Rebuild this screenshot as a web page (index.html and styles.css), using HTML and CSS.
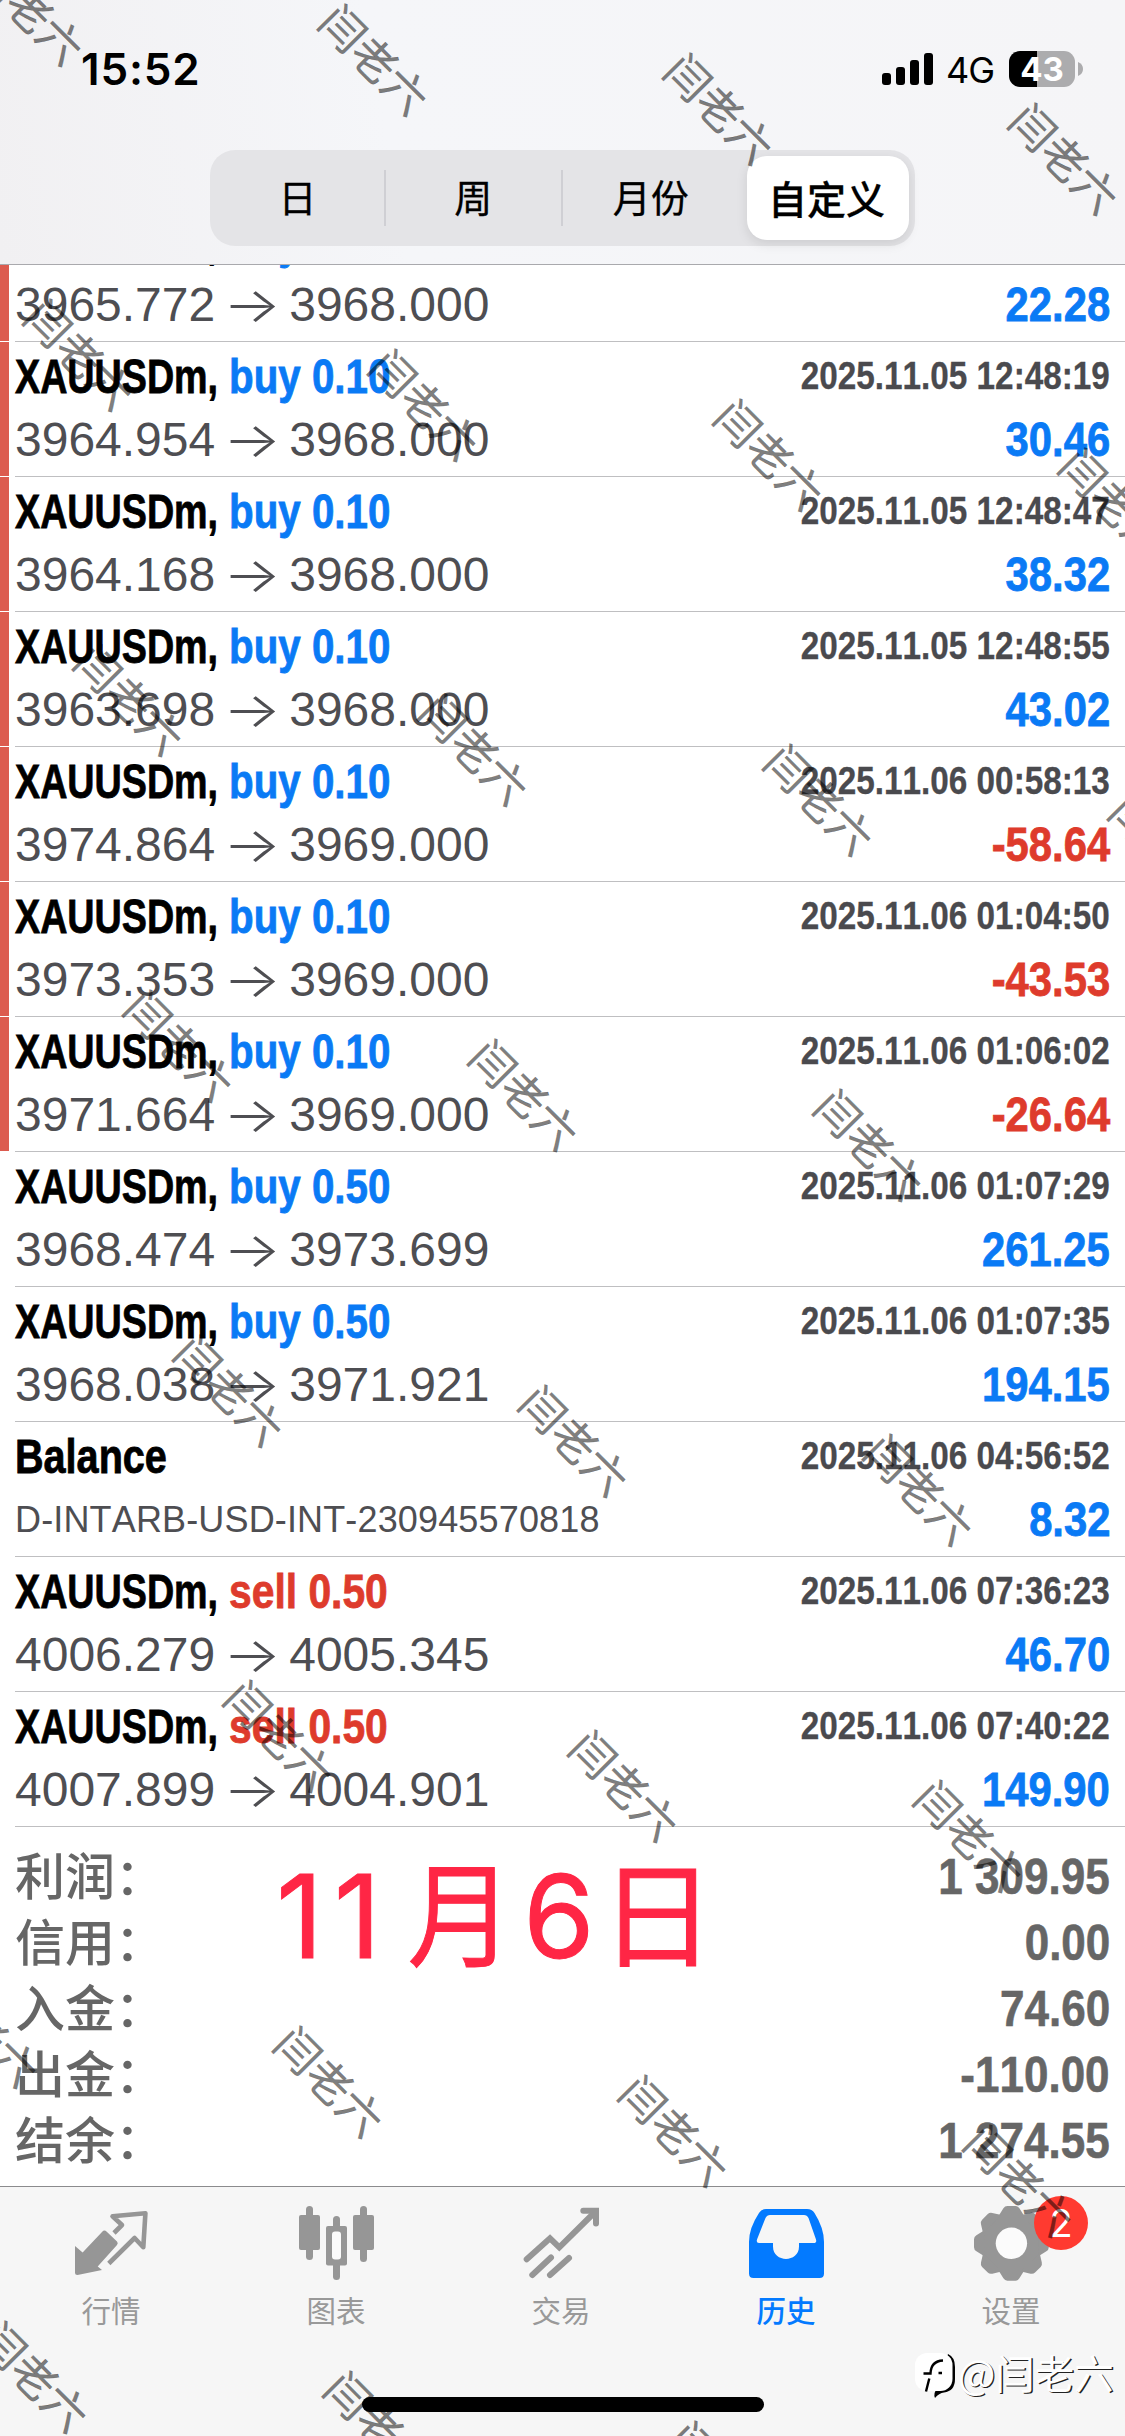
FILE: index.html
```html
<!DOCTYPE html>
<html lang="zh-CN">
<head>
<meta charset="utf-8">
<title>历史</title>
<link rel="stylesheet" href="styles.css">
</head>
<body>
<div class="screen">
  <header class="header">
    <div class="status">
      <span class="time">15:52</span>
      <div class="status-right">
        <svg class="signal" width="52" height="32" viewBox="0 0 52 32"><rect x="0" y="20" width="9" height="12" rx="3"/><rect x="14" y="14" width="9" height="18" rx="3"/><rect x="28" y="7" width="9" height="25" rx="3"/><rect x="42" y="0" width="9" height="32" rx="3"/></svg>
        <span class="network">4G</span>
        <div class="battery"><span>43</span></div>
        <svg class="nub" width="5" height="14" viewBox="0 0 5 14"><path d="M0 0q5 2 5 7t-5 7z"/></svg>
      </div>
    </div>
    <nav class="segments">
      <span class="segment">日</span>
      <span class="segment">周</span>
      <span class="segment">月份</span>
      <span class="segment selected">自定义</span>
    </nav>
  </header>

  <main class="list">
    <div class="row marked"><div class="cell">
      <div class="line"><span class="symbol">XAUUSDm,</span><span class="op buy">buy 0.10</span></div>
      <div class="line"><span class="price">3965.772</span><span class="arrow">→</span><span class="price">3968.000</span><span class="amount buy">22.28</span></div>
    </div></div>
    <div class="row marked"><div class="cell">
      <div class="line"><span class="symbol">XAUUSDm,</span><span class="op buy">buy 0.10</span><span class="date">2025.11.05 12:48:19</span></div>
      <div class="line"><span class="price">3964.954</span><span class="arrow">→</span><span class="price">3968.000</span><span class="amount buy">30.46</span></div>
    </div></div>
    <div class="row marked"><div class="cell">
      <div class="line"><span class="symbol">XAUUSDm,</span><span class="op buy">buy 0.10</span><span class="date">2025.11.05 12:48:47</span></div>
      <div class="line"><span class="price">3964.168</span><span class="arrow">→</span><span class="price">3968.000</span><span class="amount buy">38.32</span></div>
    </div></div>
    <div class="row marked"><div class="cell">
      <div class="line"><span class="symbol">XAUUSDm,</span><span class="op buy">buy 0.10</span><span class="date">2025.11.05 12:48:55</span></div>
      <div class="line"><span class="price">3963.698</span><span class="arrow">→</span><span class="price">3968.000</span><span class="amount buy">43.02</span></div>
    </div></div>
    <div class="row marked"><div class="cell">
      <div class="line"><span class="symbol">XAUUSDm,</span><span class="op buy">buy 0.10</span><span class="date">2025.11.06 00:58:13</span></div>
      <div class="line"><span class="price">3974.864</span><span class="arrow">→</span><span class="price">3969.000</span><span class="amount sell">-58.64</span></div>
    </div></div>
    <div class="row marked"><div class="cell">
      <div class="line"><span class="symbol">XAUUSDm,</span><span class="op buy">buy 0.10</span><span class="date">2025.11.06 01:04:50</span></div>
      <div class="line"><span class="price">3973.353</span><span class="arrow">→</span><span class="price">3969.000</span><span class="amount sell">-43.53</span></div>
    </div></div>
    <div class="row marked"><div class="cell">
      <div class="line"><span class="symbol">XAUUSDm,</span><span class="op buy">buy 0.10</span><span class="date">2025.11.06 01:06:02</span></div>
      <div class="line"><span class="price">3971.664</span><span class="arrow">→</span><span class="price">3969.000</span><span class="amount sell">-26.64</span></div>
    </div></div>
    <div class="row"><div class="cell">
      <div class="line"><span class="symbol">XAUUSDm,</span><span class="op buy">buy 0.50</span><span class="date">2025.11.06 01:07:29</span></div>
      <div class="line"><span class="price">3968.474</span><span class="arrow">→</span><span class="price">3973.699</span><span class="amount buy">261.25</span></div>
    </div></div>
    <div class="row"><div class="cell">
      <div class="line"><span class="symbol">XAUUSDm,</span><span class="op buy">buy 0.50</span><span class="date">2025.11.06 01:07:35</span></div>
      <div class="line"><span class="price">3968.038</span><span class="arrow">→</span><span class="price">3971.921</span><span class="amount buy">194.15</span></div>
    </div></div>
    <div class="row"><div class="cell">
      <div class="line"><span class="symbol balance">Balance</span><span class="date">2025.11.06 04:56:52</span></div>
      <div class="line"><span class="comment">D-INTARB-USD-INT-230945570818</span><span class="amount buy">8.32</span></div>
    </div></div>
    <div class="row"><div class="cell">
      <div class="line"><span class="symbol">XAUUSDm,</span><span class="op sell">sell 0.50</span><span class="date">2025.11.06 07:36:23</span></div>
      <div class="line"><span class="price">4006.279</span><span class="arrow">→</span><span class="price">4005.345</span><span class="amount buy">46.70</span></div>
    </div></div>
    <div class="row"><div class="cell">
      <div class="line"><span class="symbol">XAUUSDm,</span><span class="op sell">sell 0.50</span><span class="date">2025.11.06 07:40:22</span></div>
      <div class="line"><span class="price">4007.899</span><span class="arrow">→</span><span class="price">4004.901</span><span class="amount buy">149.90</span></div>
    </div></div>
  </main>

  <section class="summary">
    <div class="total"><span class="label">利润：</span><span class="sum">1 309.95</span></div>
    <div class="total"><span class="label">信用：</span><span class="sum">0.00</span></div>
    <div class="total"><span class="label">入金：</span><span class="sum">74.60</span></div>
    <div class="total"><span class="label">出金：</span><span class="sum">-110.00</span></div>
    <div class="total"><span class="label">结余：</span><span class="sum">1 274.55</span></div>
    <div class="note"><span class="digits month">11</span><span class="yue">月</span><span class="digits day">6</span><span>日</span></div>
  </section>

  <footer class="tabs">
    <div class="tab">
      <svg width="225" height="105" viewBox="0 0 225 105"><path fill="none" stroke="#969696" stroke-width="4.6" stroke-linejoin="round" d="M114 46L122 38L112.500 29.300L145.400 26.300L143.300 60.300L134.600 51L108.800 76.500"/><path fill="#969696" d="M75 59L82.600 65.500L102 45Q104.300 42.500 106.500 44.500L117 54.500Q118.500 56 117 58L97.700 79.500L102 83L77.500 88Q75 88 75 85.500Z"/></svg>
      <span class="name">行情</span>
    </div>
    <div class="tab">
      <svg width="225" height="105" viewBox="0 0 225 105" fill="#969696"><rect x="81" y="19" width="7" height="54" rx="3.500"/><rect x="74" y="28" width="21" height="35" rx="2"/><rect x="108" y="29" width="7" height="64" rx="3.500"/><rect x="101" y="39" width="21" height="39.500" rx="2"/><rect x="107" y="44.500" width="9" height="28" rx="3" fill="#fbfbfb"/><rect x="135" y="19" width="7" height="56" rx="3.500"/><rect x="128" y="28" width="21" height="35" rx="2"/></svg>
      <span class="name">图表</span>
    </div>
    <div class="tab">
      <svg width="225" height="105" viewBox="0 0 225 105" fill="none" stroke="#969696" stroke-width="6" stroke-linecap="round"><path d="M76.700 72.300L100 51.300L109.300 60.300L145 25"/><path d="M133.300 23.700H146V36.500"/><path d="M82.300 88L101 70.500M100 88L119 71"/></svg>
      <span class="name">交易</span>
    </div>
    <div class="tab active">
      <svg width="225" height="105" viewBox="0 0 225 105"><path fill="#037aff" fill-rule="evenodd" d="M91 22H132Q137 22 139.500 26Q149 41 149 55V86.500Q149 91 144.500 91H78.500Q74 91 74 86.500V55Q74 41 84 26Q86.500 22 91 22ZM95 28Q92 28 90.500 31L82 52.500Q81 56 84 56H98V59.500C98 76 124 76 124 59.500V56H138.500Q142 56 141 52.500L133.500 31Q132 28 129 28Z"/></svg>
      <span class="name">历史</span>
    </div>
    <div class="tab">
      <svg width="225" height="105" viewBox="0 0 225 105"><g transform="translate(111.400 56.300)" fill="#969696"><circle r="30.500"/><path id="t" d="M-13-27L-8-35Q-6.500-37.400-4-37.400H4Q6.500-37.400 8-35L13-27Z"/><use href="#t" transform="rotate(45)"/><use href="#t" transform="rotate(90)"/><use href="#t" transform="rotate(135)"/><use href="#t" transform="rotate(180)"/><use href="#t" transform="rotate(225)"/><use href="#t" transform="rotate(270)"/><use href="#t" transform="rotate(315)"/><circle r="15.700" fill="#fbfbfb"/></g></svg>
      <span class="name">设置</span>
      <b class="badge">2</b>
    </div>
  </footer>
  <div class="home"></div>
  <div class="watermarks" id="watermarks"></div>
  <div class="author">
    <svg width="43" height="50" viewBox="0 0 43 50"><path fill="#000" d="M33 3Q40 6 40 16V28Q40 40 29 41.500Q24 42 20 47Q18 42 22 38Z"/><rect x="0" y="2" width="37.500" height="38" rx="12" fill="#fff"/><path d="M8.500 22.500H15.500Q16 10 28 9.500M14.300 27.500L11 40.500M23.500 22H27" fill="none" stroke="#000" stroke-width="2.400"/></svg>
    <span>@闫老六</span>
  </div>
</div>
<script src="script.js"></script>
</body>
</html>
```
FILE: styles.css
```css
* { box-sizing: border-box; }
body { margin: 0; background: #fff; font-family: "Liberation Sans", "Noto Sans CJK SC", sans-serif; font-kerning: none; }
.screen { position: relative; width: 1125px; height: 2436px; overflow: hidden; display: flex; flex-direction: column; background: #fff; }

.header { height: 265px; flex: none; border-bottom: 1px solid #a9a9ad; background: linear-gradient(80deg, #f1f0f2, #f5f6f9 35%, #f5f5f7); display: flex; flex-direction: column; align-items: center; }
.status { width: 100%; height: 150px; padding: 39px 43px 0 81px; display: flex; justify-content: space-between; align-items: flex-start; font-family: Inter, sans-serif; }
.time { font-size: 44px; font-weight: 600; line-height: 60px; letter-spacing: 0.8px; }
.status-right { display: flex; align-items: center; height: 60px; }
.network { font-size: 36px; font-weight: 400; letter-spacing: -1px; margin: 2px 0 0 12px; width: 63px; }
.battery { width: 66px; height: 36px; border-radius: 11px; background: linear-gradient(90deg, #000 28px, #acacae 28px); color: #fff; font-size: 33px; font-weight: 700; line-height: 36px; text-align: center; }
.nub { margin-left: 3px; margin-right: -1px; fill: #acacae; }
.segments { width: 705px; height: 96px; border-radius: 25px; background: #e4e4e7; display: flex; align-items: center; padding: 6px; font: 400 38px "Noto Sans CJK SC", sans-serif; -webkit-text-stroke: 0.3px currentColor; }
.segment { width: 177px; height: 56px; line-height: 52px; text-align: center; }
.segment:first-child { width: 170px; padding-right: 5px; }
.segment:nth-child(-n+2) { border-right: 2px solid #cfcfd4; }
.segment.selected { width: 162px; height: 84px; line-height: 82px; margin-left: 8px; padding-right: 3px; border-radius: 20px; background: #fff; font-size: 39px; font-weight: 500; box-shadow: 0 4px 12px rgba(0, 0, 0, .1); }

.list { height: 1562px; flex: none; overflow: hidden; display: flex; flex-direction: column; justify-content: flex-end; }
.row { height: 135px; flex: none; display: flex; }
.row::before { content: ""; width: 9px; height: 134px; margin-right: 6px; }
.row.marked::before { background: #dc5b4f; }
.cell { flex: 1; padding: 4px 15px 0 0; border-bottom: 1px solid #bfbfc1; }
.line { display: flex; height: 63px; line-height: 62px; font-size: 48px; white-space: pre; }
.symbol { width: 214px; font-weight: 700; transform: scaleX(.785); transform-origin: 0 50%; -webkit-text-stroke: 0.8px currentColor; }
.symbol.balance { transform: scaleX(.825); }
.op { font-weight: 700; transform: scaleX(.84); transform-origin: 0 50%; -webkit-text-stroke: 0.8px currentColor; }
.op.sell { transform: scaleX(.85); }
.date { margin-left: auto; font-size: 38px; line-height: 60px; font-weight: 700; color: #4a4a4e; transform: scaleX(.876); transform-origin: 100% 50%; -webkit-text-stroke: 0.3px currentColor; }
.amount { margin-left: auto; font-weight: 700; transform: scaleX(.87); transform-origin: 100% 50%; -webkit-text-stroke: 0.8px currentColor; }
.price { color: #4e4e52; }
.arrow { width: 74px; text-align: center; font-family: Inter, sans-serif; font-weight: 300; color: #4e4e52; transform: scaleX(1.27); }
.comment { font-size: 36px; letter-spacing: 0.15px; color: #4e4e52; }
.buy { color: #0a7af5; }
.sell { color: #de3b2c; }

.summary { position: relative; height: 359px; flex: none; padding: 16px 15px 0 15px; }
.total { display: flex; justify-content: space-between; height: 66px; line-height: 66px; font-size: 50px; font-weight: 500; color: #666; font-family: "Noto Sans CJK SC", sans-serif; white-space: pre; }
.label { line-height: 60px; }
.sum { line-height: 68px; font-family: "Liberation Sans", sans-serif; font-weight: 700; transform: scaleX(.88); transform-origin: 100% 50%; -webkit-text-stroke: 0.6px currentColor; }
.note { position: absolute; left: 265px; top: 1px; display: flex; font: 400 115px/160px "Noto Sans CJK SC", sans-serif; color: #ff2645; -webkit-text-stroke: 1px currentColor; white-space: nowrap; align-items: baseline; }
.digits { font-family: Inter, sans-serif; text-align: center; }
.month { width: 138px; letter-spacing: 11px; }
.yue { transform: scaleX(.92); }
.day { width: 82px; }

.tabs { height: 250px; flex: none; border-top: 1px solid #8b8b8d; background: #f6f6f6; display: grid; grid-template-columns: repeat(5, 225px); }
.tab { position: relative; display: flex; flex-direction: column; align-items: center; font: 400 29.5px/34px "Noto Sans CJK SC", sans-serif; color: #999; }
.name { padding-right: 3px; }
.active { color: #037aff; font-weight: 500; }
.badge { position: absolute; left: 134px; top: 9px; width: 54px; height: 54px; border-radius: 50%; background: #ff3a30; color: #fff; text-align: center; font: 400 38px/54px Inter, sans-serif; }
.home { position: absolute; left: 362px; top: 2397px; width: 402px; height: 15px; border-radius: 8px; background: #000; }
.watermarks { position: absolute; inset: 0; overflow: hidden; }
.watermark { position: absolute; width: 160px; height: 60px; margin: -32px 0 0 -76px; line-height: 60px; text-align: center; font-family: "Noto Sans CJK SC", sans-serif; font-size: 44px; color: rgba(0, 0, 0, .5); -webkit-text-stroke: 0.5px rgba(0, 0, 0, .3); transform: rotate(45deg); white-space: nowrap; }
.author { position: absolute; left: 915px; top: 2351px; display: flex; font: 400 39.5px/42px "Noto Sans CJK SC", sans-serif; color: #fff; text-shadow: 1.3px 1.3px 0 #222; white-space: nowrap; }
```
FILE: script.js
```js
// Tile the account name over the screen on a slanted grid.
const layer = document.getElementById('watermarks');
for (let row = 0; row < 8; row++) {
  for (let col = -3; col < 4; col++) {
    const x = 372 + 345 * col + 50 * row;
    const y = 59.5 + 49.7 * col + 345.3 * row;
    if (x < -60 || x > 1185 || y < -60 || y > 2496) continue;
    const mark = document.createElement('span');
    mark.className = 'watermark';
    mark.textContent = '闫老六';
    mark.style.left = x + 'px';
    mark.style.top = y + 'px';
    layer.append(mark);
  }
}
```
